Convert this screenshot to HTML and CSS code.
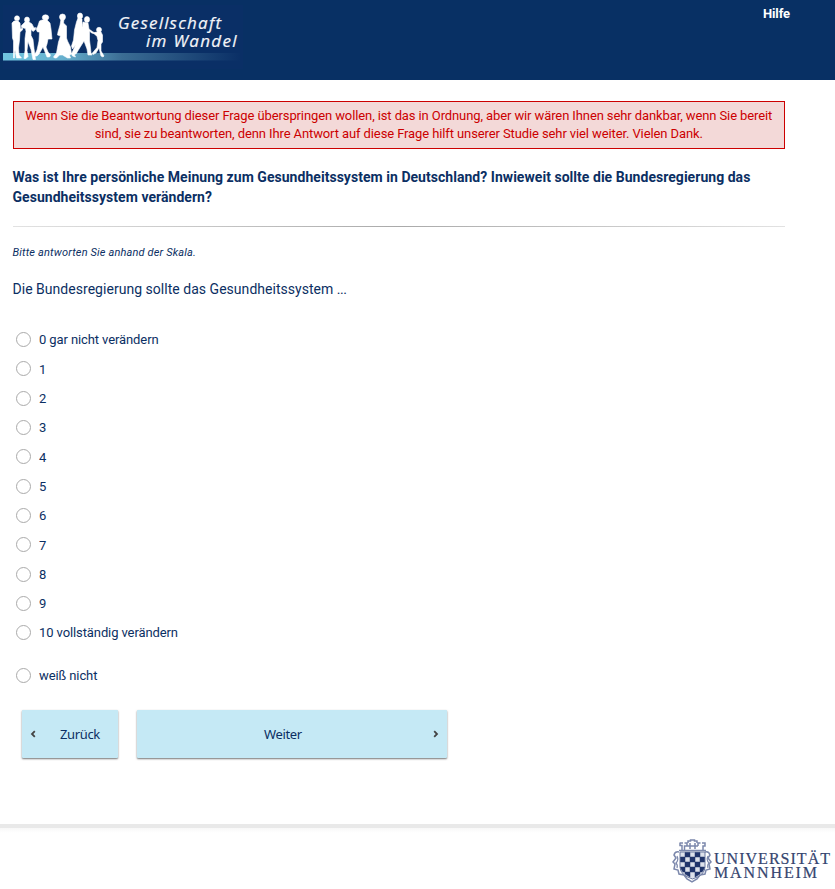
FILE: index.html
```
<!DOCTYPE html>
<html lang="de">
<head>
<meta charset="utf-8">
<title>Gesellschaft im Wandel</title>
<link rel="stylesheet" href="styles.css">
</head>
<body>
<header class="header">
  <svg class="logo" width="245" height="70" viewBox="0 0 245 70" role="img" aria-label="Gesellschaft im Wandel">
    <defs>
      <linearGradient id="band"><stop offset="0" stop-color="#70c5df"/><stop offset=".25" stop-color="#67b0ce"/><stop offset=".5" stop-color="#3b6d94"/><stop offset="1" stop-color="#0a2f66"/></linearGradient>
    </defs>
    <rect x="3" y="5" width="240" height="64" fill="#0a2f66"/>
    <rect x="3" y="53" width="238" height="7.500" fill="url(#band)"/>
    <g class="people">
      <ellipse cx="17" cy="18.300" rx="2.500" ry="2.500"/>
      <path d="M14 21h4l2 2 .500 6 2-1v2l-2.500 2-.5 8-1 8 .5 7 2.500 3h-5l-1.500-8-.5 4v4h-1l0-7v-10l-1-3-.5-15z"/>
      <ellipse cx="27" cy="19.800" rx="2.500" ry="2.800"/>
      <path d="M25 22h4l3 2 2 4 1.500-.5v2l-2.500 2-2-2v6l2 4 1 9 1.500 11h-2.500l-2-10-3-8-1 9 1 6-2 2h-2l1-8v-12l1-7-.5-3-4-1v-2z"/>
      <ellipse cx="45.500" cy="17.500" rx="3.200" ry="2.700"/>
      <path d="M42 20l5 0 3 3 1 6 1 10-4 0-1 5-1 3 2 5 2.500 3-1 2h-2.500l-4-10-4 7-2 2h-3l3-6 2-9 .500-9-2 0-1-2v-2l1-1 2-6z"/>
      <ellipse cx="62.500" cy="17" rx="3" ry="3"/>
      <path d="M61 19h3l-.5 4 3 3v12l1 3 3 6 1 7-2 1 1 3h-3l-5-3h-3l-3 3h-2l-1-1 3-4 2-11 2-6-3-1 .500-3 2-7z"/>
      <ellipse cx="80" cy="16" rx="2.600" ry="3"/>
      <path d="M78 18l4 1v8l2 3-.5 7-3 3-1 6-5 9 1 2-3-1-1-2 4-9-3 4-1-3 2-6 1-10 2-8z"/>
      <ellipse cx="87" cy="19.500" rx="2.600" ry="3"/>
      <path d="M83 22l5 1 1 6 4 3 3 1-.5 1-4-1-2-2v9l1 8 .500 5 1 2h-4l-1-6-3-8-5 8-3 5-3-1 5-8 3-12z"/>
      <ellipse cx="99" cy="29.800" rx="2.500" ry="2.500"/>
      <path d="M97 32h4l1.500 3v7l-1.500 2v7l3 5-1 1-2-1-2-8-3 5-3 1.500-1-1 5-6 1-7-1-4-3-3 1-1z"/>
    </g>
    <g class="logo-text">
      <text x="118" y="29" textLength="103">Gesellschaft</text>
      <text x="146" y="47" textLength="90.500">im Wandel</text>
    </g>
  </svg>
  <a class="help">Hilfe</a>
</header>
<main class="content">
  <div class="notice">Wenn Sie die Beantwortung dieser Frage überspringen wollen, ist das in Ordnung, aber wir wären Ihnen sehr dankbar, wenn Sie bereit sind, sie zu beantworten, denn Ihre Antwort auf diese Frage hilft unserer Studie sehr viel weiter. Vielen Dank.</div>
  <h1 class="question">Was ist Ihre persönliche Meinung zum Gesundheitssystem in Deutschland? Inwieweit sollte die Bundesregierung das Gesundheitssystem verändern?</h1>
  <div class="rule"></div>
  <p class="hint">Bitte antworten Sie anhand der Skala.</p>
  <p class="lead">Die Bundesregierung sollte das Gesundheitssystem <span class="dots">...</span></p>
  <div class="options">
    <label class="option"><input type="radio" name="a"><span>0 gar nicht verändern</span></label>
    <label class="option"><input type="radio" name="a"><span>1</span></label>
    <label class="option"><input type="radio" name="a"><span>2</span></label>
    <label class="option"><input type="radio" name="a"><span>3</span></label>
    <label class="option"><input type="radio" name="a"><span>4</span></label>
    <label class="option"><input type="radio" name="a"><span>5</span></label>
    <label class="option"><input type="radio" name="a"><span>6</span></label>
    <label class="option"><input type="radio" name="a"><span>7</span></label>
    <label class="option"><input type="radio" name="a"><span>8</span></label>
    <label class="option"><input type="radio" name="a"><span>9</span></label>
    <label class="option"><input type="radio" name="a"><span>10 vollständig verändern</span></label>
    <label class="option separate"><input type="radio" name="a"><span>weiß nicht</span></label>
  </div>
  <div class="buttons">
    <button class="btn back"><svg width="6" height="8" viewBox="0 0 6 8"><path d="M4.800 1.200 2 4l2.800 2.800"/></svg><span>Zurück</span></button>
    <button class="btn next"><span>Weiter</span><svg width="6" height="8" viewBox="0 0 6 8"><path d="M1.200 1.200 4 4 1.200 6.800"/></svg></button>
  </div>
</main>
<footer class="footer">
  <svg width="165" height="50" viewBox="670 836 165 50" role="img" aria-label="Universität Mannheim">
    <g fill="none" stroke="#7c88ac" stroke-width="1.500">
      <path d="M680 842.500v3h2v5M680 843h3M684.500 843h2.500v3h-2.500v4M688 843v-2h2.500v-1h4v1h2.500v2M690 843v6M695 843v6M698 846v-3h2.500M702 843h3v3h-2v5M687 846h11M679 850.500h27"/>
      <path d="M679 852q-4-1-5 3l2 3-3 4 2 2-1 5 4 1 1 4 5 1 3 4 5 3 5-3 3-4 5-1 1-4 4-1-1-5 2-2-3-4 2-3q-1-4-5-3"/>
      <path d="M677 856q2 4-1 7 2 2 1 5M708 856q-2 4 1 7-2 2-1 5" stroke-width="1.200"/>
    </g>
    <path d="M680 852h25v15q0 8-12.500 12-12.500-4-12.500-12z" fill="#dde1eb" stroke="#6b789f"/>
    <path d="M685 852.500h5v4.500h-5zM695 852.500h5v4.500h-5zM680.500 857h4.500v5h-4.500zM690 857h5v5h-5zM700 857h4.500v5h-4.500zM685 862h5v5h-5zM695 862h5v5h-5zM680.500 867h4.500v5l-2 0q-2-2-2.500-5zM690 867h5v5h-5zM700 867h4.500q-.5 3-2.500 5h-2zM685 872h5v5l-5-3zM695 872h5v2l-5 3z" fill="#20346b" stroke="#20346b" stroke-width=".5"/>
    <g class="uni-text">
      <text x="714" y="864" textLength="116">UNIVERSITÄT</text>
      <text x="714" y="878" textLength="103">MANNHEIM</text>
    </g>
  </svg>
</footer>
</body>
</html>
```
FILE: styles.css
```
* { box-sizing: border-box; }
body { margin: 0; height: 889px; display: flex; flex-direction: column; background: #fff; color: #0b2f63; font: 13px/18px Roboto, sans-serif; overflow: hidden; }
.header { height: 80px; flex: none; background: #083064; display: flex; justify-content: space-between; align-items: flex-start; }
.people { fill: #fff; stroke: #fff; stroke-width: .6px; stroke-linejoin: round; }
.logo-text { font: italic 17px "Open Sans", sans-serif; fill: #f3f5f9; stroke: #f3f5f9; stroke-width: .2px; }
.help { color: #fff; font-weight: 700; margin: 5px 45px 0 0; letter-spacing: -.1px; }
.content { padding: 21px 50px 0 12.500px; flex: none; height: 744px; }
.notice { height: 48px; padding: 5px 8px; border: 1px solid #c00; background: #f3d9d8; color: #c00; text-align: center; letter-spacing: -.105px; }
.question { margin: 18px 0 0; font-size: 14px; line-height: 20px; font-weight: 700; letter-spacing: .037px; }
.rule { height: 1px; margin-top: 19px; background: linear-gradient(90deg, #e2e2e2, #aaa 50%, #e2e2e2); }
.hint { margin: 18px 0 0; font-size: 11px; line-height: 16px; font-style: italic; letter-spacing: .16px; }
.lead { margin: 18px 0 0; font-size: 14px; line-height: 20px; letter-spacing: .03px; }
.dots { letter-spacing: -.5px; }
.options { margin-top: 26px; }
.option { display: flex; align-items: center; height: 29.320px; padding-left: 3.500px; letter-spacing: -.1px; }
.option input { appearance: none; width: 15px; height: 15px; margin: 0 8px 0 0; border: 1px solid #aaa; border-radius: 50%; background: #fff; }
.option span { padding-top: 1.400px; }
.separate { margin-top: 13px; }
.buttons { display: flex; gap: 19px; margin: 20px 0 0 9.500px; }
.btn { height: 48px; padding: 0; border: 0; border-radius: 1px; background: #c5e9f5; color: #0b2f63; font: 13px/18px "Noto Sans", sans-serif; letter-spacing: -.35px; box-shadow: 0 1px 2px rgba(0,0,0,.55); display: flex; align-items: center; }
.btn svg { fill: none; stroke: #444; stroke-width: 1.800; }
.back { width: 96px; padding-left: 8px; gap: 24px; }
.next { width: 310px; justify-content: space-between; padding: 0 8px 0 127px; }
.footer { height: 65px; border-top: 4px solid #e9e9e9; display: flex; justify-content: flex-end; padding-top: 8px; background: linear-gradient(#f8f8f8, #fff 5px); }
.uni-text { font: 16px "Liberation Serif", serif; fill: #35456f; stroke: #35456f; stroke-width: .2px; }
```
